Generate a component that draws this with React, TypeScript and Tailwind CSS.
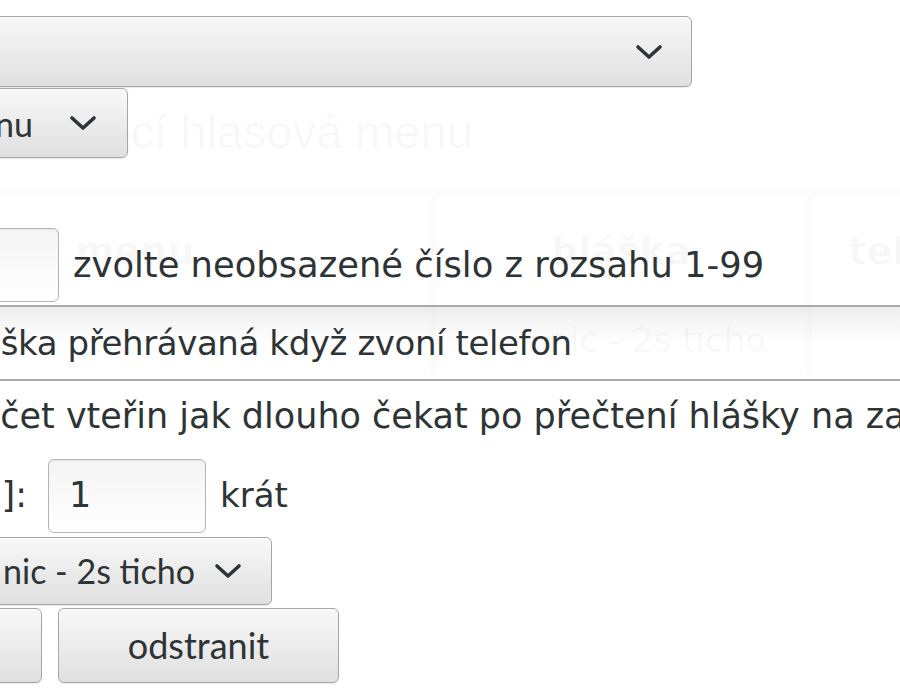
import React from "react";

const Chevron = ({ className = "" }: { className?: string }) => (
  <svg viewBox="0 0 28 16" className={className} fill="none">
    <path d="M3 3 L14 13 L25 3" stroke="#2e3436" strokeWidth="3.6" strokeLinecap="round" strokeLinejoin="round" />
  </svg>
);

const widget =
  "border border-[#a6a6a6] rounded-[6px] bg-gradient-to-b from-[#f8f8f8] to-[#e0e0e0] shadow-[inset_0_1px_0_#ffffff,0_1px_1px_rgba(0,0,0,0.08)]";
const entry =
  "border border-[#b4b4b4] rounded-[6px] bg-gradient-to-b from-[#f4f4f4] to-white shadow-[inset_0_1px_1px_rgba(0,0,0,0.06)]";

export default function App() {
  return (
    <div
      className="relative w-[900px] h-[700px] overflow-hidden bg-white text-[#2e3436]"
      style={{ fontFamily: '"DejaVu Sans", "Liberation Sans", sans-serif' }}
    >
      {/* faded page heading, sits behind the dialog */}
      <div
        className="pointer-events-none absolute left-[21px] top-[97px] z-0 text-[47px] whitespace-nowrap text-black/[0.03]"
        style={{ fontFamily: '"Liberation Sans", Arial, sans-serif' }}
      >
        Uvítací hlasová menu
      </div>

      {/* faded table showing through */}
      <div className="pointer-events-none absolute inset-0 z-20 text-black/[0.03]">
        <div className="absolute left-0 top-[187px] w-[900px] h-[10px] bg-black/[0.012]" />
        <div className="absolute left-0 top-[197px] w-[900px] grid grid-cols-[436px_376px_1fr] text-[38px] font-bold">
          <div className="h-[108px] flex items-center pl-[75px] border-r-[6px] border-black/[0.012]">menu</div>
          <div className="h-[108px] flex items-center justify-center border-r-[6px] border-black/[0.012]">hláška</div>
          <div className="h-[108px] flex items-center pl-[36px]">telefon</div>
          <div className="h-[70px] border-r-[6px] border-black/[0.012]" />
          <div className="h-[70px] flex items-center justify-end pr-[40px] font-normal text-[34px] border-r-[6px] border-black/[0.012]">
            nic - 2s ticho
          </div>
          <div className="h-[70px]" />
        </div>
      </div>

      {/* dialog contents */}
      <div className="relative z-10 flex flex-col pt-[16px]">
        <div className={`${widget} h-[71px] -ml-[20px] w-[712px] flex items-center justify-end pr-[28px]`}>
          <Chevron className="w-[28px] h-[16px]" />
        </div>

        <div
          className={`${widget} mt-[1px] h-[70px] -ml-[200px] w-[328px] flex items-center justify-end pr-[30px] gap-[36px]`}
          style={{ fontFamily: 'Lato, "Open Sans", sans-serif' }}
        >
          <span className="text-[34px] whitespace-nowrap">Hlasové menu</span>
          <Chevron className="w-[28px] h-[16px]" />
        </div>

        <div className="mt-[70px] flex items-center">
          <div className={`${entry} h-[74px] -ml-[100px] w-[159px] shrink-0`} />
          <span className="ml-[14px] text-[35.3px] whitespace-nowrap">zvolte neobsazené číslo z rozsahu 1-99</span>
        </div>

        <div className="mt-[3px] h-[76px] -ml-[10px] w-[920px] border-y-2 border-[#a9a9a9] bg-gradient-to-b from-[#eeeeee] via-white to-white flex items-center">
          <span className="ml-[-44px] text-[34px] tracking-[-0.4px] whitespace-nowrap">Hláška přehrávaná když zvoní telefon</span>
        </div>

        <div className="mt-[9px] -ml-[41px] text-[35px] whitespace-nowrap">
          Počet vteřin jak dlouho čekat po přečtení hlášky na zadání volby
        </div>

        <div className="mt-[16px] flex items-center">
          <div className="w-[27px] flex justify-end whitespace-nowrap text-[35px]">
            <span>Opakování [x]:</span>
          </div>
          <div className={`${entry} ml-[21px] h-[74px] w-[158px] flex items-center pl-[20px] text-[35px]`}>1</div>
          <span className="ml-[14px] text-[34px]">krát</span>
        </div>

        <div
          className={`${widget} mt-[4px] h-[68px] -ml-[200px] w-[472px] flex items-center justify-end pr-[29px] gap-[19px]`}
          style={{ fontFamily: 'Lato, "Open Sans", sans-serif' }}
        >
          <span className="text-[34px] whitespace-nowrap">přehrát nic - 2s ticho</span>
          <Chevron className="w-[28px] h-[16px]" />
        </div>

        <div className="mt-[3px] flex gap-[16px]" style={{ fontFamily: 'Lato, "Open Sans", sans-serif' }}>
          <button className={`${widget} h-[75px] -ml-[240px] w-[282px] text-[36px] text-[#2e3436]`}>uložit</button>
          <button className={`${widget} h-[75px] w-[281px] text-[36px] text-[#2e3436]`}>odstranit</button>
        </div>
      </div>
    </div>
  );
}
